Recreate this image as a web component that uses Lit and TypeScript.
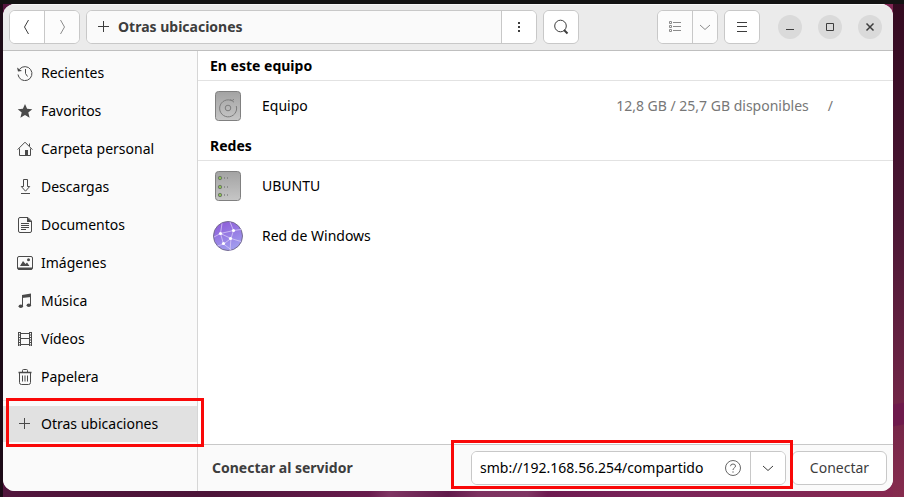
import { LitElement, html, svg, css } from "lit";
import { customElement } from "lit/decorators.js";

const icon = (body: unknown, size = 16) =>
  html`<svg width=${size} height=${size} viewBox="0 0 ${size} ${size}" fill="none" stroke="currentColor" aria-hidden="true">${body}</svg>`;

const icons = {
  recent: svg`<path d="M2.6 4.1A7 7 0 1 1 1 9.5M8.5 4v4.5l2 3"/><path d="M0 2.500l1 4 4-.5z" fill="currentColor" stroke="none"/>`,
  star: svg`<path d="M8 1l2.1 4.8 5.2.4-4 3.4 1.3 5.1L8 12l-4.6 2.7 1.3-5.1-4-3.4 5.2-.4z" fill="currentColor" stroke="none"/>`,
  home: svg`<path d="M.6 8.6L8 1.2l7.4 7.4M2.5 7.5v7h11v-7M12.5 5V2.5"/><path d="M8 9h3v6H8z" fill="currentColor" stroke="none"/>`,
  download: svg`<path d="M6.5.5h4v7h2.2L8.5 12.2 4.3 7.500h2.200zM4 14.500h9"/>`,
  document: svg`<path d="M3 .5h8L14.500 4v10q0 1.500-1.500 1.500H3q-1.500 0-1.500-1.500V2Q1.500.5 3 .5zM4 6.500h8M4 8.500h8M4 10.500h8M4 12.500h5"/><path d="M10 0l5 5h-5z" fill="currentColor" stroke="none"/>`,
  image: svg`<rect x=".5" y="1.500" width="15" height="13" rx="1.500"/><path d="M1 12.500h14v2H1zM3 11l3-5 2.500 3L10 7.500l2.500 3.500z" fill="currentColor" stroke="none"/><circle cx="11.500" cy="4.800" r="1.500" fill="currentColor" stroke="none"/>`,
  music: svg`<path d="M5.500 13V3.500M13.500 12V2"/><path d="M5 2l9-1.500V4L5 5z" fill="currentColor" stroke="none"/><ellipse cx="3.800" cy="13.200" rx="2.200" ry="1.800" fill="currentColor" stroke="none"/><ellipse cx="11.800" cy="12.200" rx="2.200" ry="1.800" fill="currentColor" stroke="none"/>`,
  video: svg`<path d="M1.500 1v14M3.500 1v14M12.500 1v14M14.500 1v14M3.500 2.500h9M3.500 7.500h9M3.500 13.500h9"/><path d="M2.500 1v14M13.500 1v14" stroke-dasharray="1 1.500"/>`,
  trash: svg`<path d="M5.500 3V1.500q0-1 1-1h3q1 0 1 1V3M2.500 4v9.500q0 2 2 2h7q2 0 2-2V4M5.500 6.500v6M8 6.500v6M10.500 6.500v6"/><path d="M1.500 3.500h13" stroke-width="1.500"/>`,
  plus: svg`<path d="M7.500 2v11M2 7.500h11"/>`,
  back: svg`<path d="M9.500 1L5.500 8l4 7"/>`,
  forward: svg`<path d="M6.500 1l4 7-4 7"/>`,
  dots: svg`<path d="M7 3h2v2H7zM7 7h2v2H7zM7 11h2v2H7z" fill="currentColor" stroke="none"/>`,
  search: svg`<circle cx="7.500" cy="7" r="5.800"/><path d="M11 11l3.500 3.500" stroke-width="2"/>`,
  list: svg`<path d="M2.500 2.500h2v2h-2zM2.500 6.500h2v2h-2zM2.500 10.500h2v2h-2zM6 3.500h8M6 7.500h8M6 11.500h8"/>`,
  chevron: svg`<path d="M3 6l5 4.500L13 6"/>`,
  menu: svg`<path d="M3 3.500h10M3 7.500h10M3 12.500h10"/>`,
  minimize: svg`<path d="M4 10.500h8"/>`,
  maximize: svg`<path d="M4.500 4.500h7v7h-7z"/>`,
  close: svg`<path d="M4.500 4.500l7 7M11.500 4.500l-7 7" stroke-width="1.500"/>`,
  help: svg`<circle cx="8" cy="8" r="7.500"/><path d="M5.500 6.200q0-2.200 2.500-2.200t2.500 2q0 1.200-1.300 2Q8 8.700 8 10M8 11.300v1.400"/>`,
};

const diskIcon = svg`
  <defs><linearGradient id="metal" x1="0" y1="0" x2="0" y2="1"><stop stop-color="#a3a3a3"/><stop offset="1" stop-color="#c6c6c6"/></linearGradient></defs>
  <rect x="3.500" y="1.500" width="25" height="29" rx="3" fill="url(#metal)" stroke="#808080"/>
  <path d="M22 12.200A8.500 8.500 0 1 0 24.300 16M18 9.800q2.500 1.500 4-.5" stroke="#7c7c7c"/>
  <circle cx="16" cy="18" r="2.800" stroke="#7c7c7c"/>`;

const serverIcon = svg`
  <defs><linearGradient id="case" x1="0" y1="0" x2="0" y2="1"><stop stop-color="#a3a3a3"/><stop offset="1" stop-color="#c6c6c6"/></linearGradient></defs>
  <rect x="3.500" y="1.500" width="25" height="29" rx="3" fill="url(#case)" stroke="#808080"/>
  ${[8, 17, 25].map((y) => svg`<circle cx="8" cy=${y} r="1.700" fill="#8cc152" stroke="#6f7a68"/><path d=${`M12 ${y}h1M15 ${y}h1`} stroke="#666" stroke-width="1"/>`)}`;

const networkIcon = svg`
  <defs><linearGradient id="globe" x1="0" y1="0" x2=".4" y2="1"><stop stop-color="#8b55d6"/><stop offset="1" stop-color="#a09bee"/></linearGradient></defs>
  <circle cx="16" cy="16" r="14.500" fill="url(#globe)" stroke="#766d91"/>
  <path d="M8.500 13.500L10 3.500M8.500 13.500L2 17M8.500 13.500l10.500 5 10 3M8.500 13.500l3 10.500 7.500-5.500 2.500-8L18 2M21.500 10.500l7.500-1M8.500 13.500l13-3M11.500 24l-6 2M11.500 24l8 6M19 18.500l-1 12" stroke="#d6c9f5" stroke-width=".8"/>
  <g fill="#fff" stroke="none"><circle cx="8.500" cy="13.500" r="1.600"/><circle cx="21.500" cy="10.500" r="1.600"/><circle cx="18.500" cy="18.500" r="1.600"/><circle cx="11.500" cy="23.500" r="1.600"/></g>`;

const places = [
  { label: "Recientes", icon: icons.recent },
  { label: "Favoritos", icon: icons.star },
  { label: "Carpeta personal", icon: icons.home },
  { label: "Descargas", icon: icons.download },
  { label: "Documentos", icon: icons.document },
  { label: "Imágenes", icon: icons.image },
  { label: "Música", icon: icons.music },
  { label: "Vídeos", icon: icons.video },
  { label: "Papelera", icon: icons.trash },
];

const sections = [
  { title: "En este equipo", rows: [{ name: "Equipo", icon: diskIcon, free: "12,8 GB / 25,7 GB disponibles", mount: "/" }] },
  { title: "Redes", rows: [{ name: "UBUNTU", icon: serverIcon }, { name: "Red de Windows", icon: networkIcon }] },
] as { title: string; rows: { name: string; icon: unknown; free?: string; mount?: string }[] }[];

@customElement("app-root")
export class AppRoot extends LitElement {
  static styles = css`
    :host {
      display: flex;
      box-sizing: border-box;
      min-height: 100vh;
      padding: 4px 11px 6px 3px;
      font: 14px/20px "Noto Sans", sans-serif;
      color: #000;
      background:
        linear-gradient(#131313, #131313) top / 100% 4px no-repeat,
        linear-gradient(90deg, #1c0a16, #1c0a16) left / 3px 100% no-repeat,
        linear-gradient(170deg, transparent 22%, #6e1a4c 23%, #6e1a4c 40%, transparent 41%) right bottom / 11px 120px no-repeat,
        linear-gradient(#330a20, #4c1735 45%, #6b2344 75%, #862b4e) right / 11px 100% no-repeat,
        linear-gradient(100deg, #55163f, #4c1438 30%, #681b4d 46%, #7f3563 48%, #611a4b 54%, #7d3160 57%, #7f3563 62%, #6e1a50 64%, #7a245a 75%, #86284f);
    }
    * { box-sizing: border-box; }
    svg { display: block; flex: none; }
    button, input { font: inherit; margin: 0; }
    button { display: flex; align-items: center; justify-content: center; padding: 0; color: #3d3d3d; background: #fff; border: 0; }
    .window { flex: 1; min-width: 0; display: flex; flex-direction: column; border-radius: 12px; overflow: hidden; background: #fff; }
    .header { display: flex; align-items: center; gap: 6px; height: 47px; padding: 0 11px 0 6px; background: #ebebeb; border-bottom: 1px solid #bfbfbf; box-shadow: inset 0 1px #f8f8f8; }
    .group { display: flex; flex: none; height: 34px; border: 1px solid #c8c8c8; border-radius: 6px; overflow: hidden; background: #fff; }
    .group button { width: 34px; }
    .group button + button { border-left: 1px solid #c8c8c8; width: 35px; }
    .group button + .narrow { width: 25px; }
    .group .faded { color: #8b8b8b; background: #fcfcfc; }
    .path { flex: 1; }
    .path .crumb { flex: 1; justify-content: flex-start; gap: 6px; padding-left: 9px; font-weight: 700; background: #fafafa; }
    .spacer { flex: none; width: 66px; }
    .controls { display: flex; gap: 16px; margin-left: 12px; }
    .controls button { width: 24px; height: 24px; border-radius: 50%; background: #dadada; }
    .body { flex: 1; display: grid; grid-template-columns: 195px 1fr; }
    .sidebar { background: #fafafa; border-right: 1px solid #d6d6d6; }
    .places { margin: 0; padding: 3px 0 4px; list-style: none; }
    .place { display: flex; align-items: center; gap: 8px; height: 38px; padding-left: 14px; color: inherit; text-decoration: none; }
    .place svg { color: #4a4a4a; }
    .other { position: relative; border-top: 1px solid #e2e2e2; padding: 5px 0; }
    .other .place { height: 36px; background: #e1e1e1; }
    .mark { position: absolute; border: 3px solid #f90808; pointer-events: none; }
    .mark-place { inset: -3px -7px 0 3px; z-index: 1; }
    .main { display: flex; flex-direction: column; min-width: 0; }
    .title { margin: 0; height: 30px; padding: 0 12px; font-size: 14px; line-height: 30px; font-weight: 700; border-bottom: 1px solid #e2e2e2; }
    .rows { margin: 0; padding: 0; list-style: none; }
    .row { display: flex; align-items: center; height: 50px; padding: 0 60px 0 14px; }
    .name { margin-left: 18px; flex: 1; }
    .free, .mount { color: #777; }
    .mount { margin-left: 19px; }
    .connect { display: flex; align-items: center; gap: 6px; height: 47px; margin-top: auto; padding: 0 6px 0 14px; background: #fafafa; border-top: 1px solid #c8c8c8; }
    .connect-label { flex: 1; font-weight: 700; color: #3d3d3d; }
    .address { position: relative; }
    .address .entry { width: 244px; border: 0; outline: 0; padding: 0 0 0 8px; background: #fff; color: #000; }
    .group .help { width: 34px; color: #666; }
    .submit { width: 95px; height: 34px; border: 1px solid #c8c8c8; border-radius: 6px; }
    .mark-address { inset: -11px -7px -4px -20px; }
  `;

  render() {
    return html`
      <div class="window">
        <header class="header">
          <div class="group">
            <button aria-label="Atrás">${icon(icons.back)}</button>
            <button class="faded" aria-label="Adelante">${icon(icons.forward)}</button>
          </div>
          <div class="group path">
            <button class="crumb">${icon(icons.plus)}<span>Otras ubicaciones</span></button>
            <button aria-label="Opciones de la ubicación">${icon(icons.dots)}</button>
          </div>
          <div class="group"><button aria-label="Buscar">${icon(icons.search)}</button></div>
          <div class="spacer"></div>
          <div class="group">
            <button class="faded" aria-label="Vista de lista">${icon(icons.list)}</button>
            <button class="faded narrow" aria-label="Opciones de vista">${icon(icons.chevron)}</button>
          </div>
          <div class="group"><button aria-label="Menú">${icon(icons.menu)}</button></div>
          <div class="controls">
            <button aria-label="Minimizar">${icon(icons.minimize)}</button>
            <button aria-label="Maximizar">${icon(icons.maximize)}</button>
            <button aria-label="Cerrar">${icon(icons.close)}</button>
          </div>
        </header>
        <div class="body">
          <nav class="sidebar">
            <ul class="places">
              ${places.map((p) => html`<li><a class="place" href="#">${icon(p.icon)}<span>${p.label}</span></a></li>`)}
            </ul>
            <div class="other">
              <a class="place" href="#" aria-current="page">${icon(icons.plus)}<span>Otras ubicaciones</span></a>
              <span class="mark mark-place"></span>
            </div>
          </nav>
          <main class="main">
            ${sections.map((s) => html`
              <section>
                <h2 class="title">${s.title}</h2>
                <ul class="rows">
                  ${s.rows.map((r) => html`
                    <li class="row">
                      ${icon(r.icon, 32)}<span class="name">${r.name}</span>
                      ${r.free ? html`<span class="free">${r.free}</span><span class="mount">${r.mount}</span>` : ""}
                    </li>`)}
                </ul>
              </section>`)}
            <form class="connect" @submit=${(e: Event) => e.preventDefault()}>
              <label class="connect-label" for="server">Conectar al servidor</label>
              <div class="address">
                <div class="group">
                  <input class="entry" id="server" type="text" .value=${"smb://192.168.56.254/compartido"} />
                  <button class="help" type="button" aria-label="Ayuda">${icon(icons.help)}</button>
                  <button class="drop" type="button" aria-label="Servidores recientes">${icon(icons.chevron)}</button>
                </div>
                <span class="mark mark-address"></span>
              </div>
              <button class="submit">Conectar</button>
            </form>
          </main>
        </div>
      </div>
    `;
  }
}
